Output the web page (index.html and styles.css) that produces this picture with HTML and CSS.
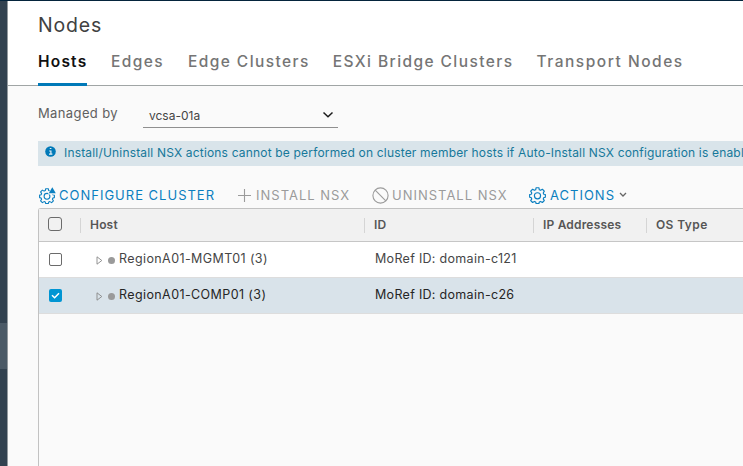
FILE: index.html
```html
<!DOCTYPE html>
<html lang="en">
<head>
<meta charset="utf-8">
<title>Nodes</title>
<link rel="stylesheet" href="styles.css">
</head>
<body>
<svg width="0" height="0" class="defs">
  <symbol id="gear" viewBox="0 0 16 16">
    <path d="M6.700.7h2.600l.4 1.900 1.200.5 1.700-1 1.800 1.800-1 1.700.5 1.200 1.500.3v2.500l-1.500.4-.5 1.200 1 1.600-1.800 1.800-1.700-1-1.200.5-.4 1.500H6.700l-.4-1.500-1.200-.5-1.700 1-1.800-1.800 1-1.600-.5-1.200L.6 9.600V7.100l1.500-.3.5-1.200-1-1.700 1.800-1.800 1.700 1 1.200-.5z" fill="none" stroke="currentColor" stroke-width="1.100" stroke-linejoin="round"/>
    <circle cx="8" cy="8.300" r="2.900" fill="none" stroke="currentColor" stroke-width="1.100"/>
  </symbol>
</svg>
<div class="app">
  <aside class="rail"><div class="rail-active"></div></aside>
  <main class="page">
    <header class="header">
      <h1 class="title">Nodes</h1>
      <nav class="tabs">
        <a class="tab active">Hosts</a>
        <a class="tab edges">Edges</a>
        <a class="tab">Edge Clusters</a>
        <a class="tab">ESXi Bridge Clusters</a>
        <a class="tab transport">Transport Nodes</a>
      </nav>
    </header>
    <section class="content">
      <div class="managed">
        <span class="label">Managed by</span>
        <div class="select">
          <span>vcsa-01a</span>
          <svg width="12" height="8" viewBox="0 0 12 8"><path d="M1.500 1.500 6 5.800l4.500-4.300" fill="none" stroke="#1c1c1c" stroke-width="1.500"/></svg>
        </div>
      </div>
      <div class="info">
        <svg width="11" height="11" viewBox="0 0 11 11"><circle cx="5.500" cy="5.500" r="5.300" fill="#0079b8"/><path d="M4.800 2.500h1.600M4.200 5h1.700v3M4 8.200h3.400" fill="none" stroke="#e4eef4" stroke-width="1.200"/></svg>
        <span>Install/Uninstall NSX actions cannot be performed on cluster member hosts if Auto-Install NSX configuration is enabl</span>
      </div>
      <div class="toolbar">
        <a class="action configure">
          <svg width="17" height="17" viewBox="0 0 17 17"><use href="#gear" y="1" width="16" height="16"/><path d="M8.800 7.400 13 -1 17 -1V7.400z" fill="#fafafa"/><path d="M9.800 6.300 13.300.2l3.500 6.100z" fill="currentColor"/></svg>
          <span>CONFIGURE CLUSTER</span>
        </a>
        <a class="action install disabled">
          <svg width="15" height="15" viewBox="0 0 15 15"><path d="M7.500 1v13M1 7.500h13" stroke="currentColor" stroke-width="1.100"/></svg>
          <span>INSTALL NSX</span>
        </a>
        <a class="action uninstall disabled">
          <svg width="17" height="17" viewBox="0 0 17 17"><circle cx="8.500" cy="8.500" r="7.600" fill="none" stroke="currentColor" stroke-width="1.100"/><path d="m3.200 3.200 10.600 10.600" stroke="currentColor" stroke-width="1.100"/></svg>
          <span>UNINSTALL NSX</span>
        </a>
        <a class="action more">
          <svg width="17" height="17" viewBox="0 0 16 16"><use href="#gear" width="16" height="16"/></svg>
          <span>ACTIONS</span>
          <svg class="caret" width="8" height="6" viewBox="0 0 8 6"><path d="m1 1 3 3 3-3" fill="none" stroke="#666" stroke-width="1.300"/></svg>
        </a>
      </div>
      <div class="grid">
        <div class="row head">
          <div class="check"><i class="box large"></i></div>
          <div class="col">Host</div>
          <div class="col">ID</div>
          <div class="col ip">IP Addresses</div>
          <div class="col os">OS Type</div>
        </div>
        <div class="row">
          <div class="check"><i class="box"></i></div>
          <div class="cell host"><svg width="7" height="9" viewBox="0 0 7 9"><path d="M1 .8v7.400l4.800-3.700z" fill="none" stroke="#888" stroke-width=".9"/></svg><i class="dot"></i><span>RegionA01-MGMT01 (3)</span></div>
          <div class="cell id">MoRef ID: domain-c121</div>
        </div>
        <div class="row selected">
          <div class="check"><i class="box checked"><svg width="13" height="13" viewBox="0 0 13 13"><path d="m3 6.300 2.600 2.500L10 4.300" fill="none" stroke="#fff" stroke-width="1.500"/></svg></i></div>
          <div class="cell host"><svg width="7" height="9" viewBox="0 0 7 9"><path d="M1 .8v7.400l4.800-3.700z" fill="none" stroke="#888" stroke-width=".9"/></svg><i class="dot"></i><span>RegionA01-COMP01 (3)</span></div>
          <div class="cell id">MoRef ID: domain-c26</div>
        </div>
      </div>
    </section>
  </main>
</div>
</body>
</html>
```
FILE: styles.css
```css
* { box-sizing: border-box; }
body {
  margin: 0;
  font-family: Inter, "Liberation Sans", sans-serif;
  font-size: 13px;
  color: #454545;
  white-space: nowrap;
  overflow: hidden;
}
svg { display: block; flex: none; }
.defs { display: none; }
.app { display: flex; height: 466px; border-top: 1px solid #04243c; }
.rail { flex: none; width: 8px; padding-top: 322px; background: #324250; border-right: 1px solid #939a9f; }
.rail-active { height: 46px; background: #4b5a67; }
.page { flex: 1; min-width: 0; display: flex; flex-direction: column; background: #fafafa; }

.header { height: 85px; padding-left: 30px; background: #fff; border-bottom: 1px solid #a0a5a5; }
.title { margin: 0; padding-top: 12px; font-size: 19.500px; line-height: 25px; font-weight: 400; letter-spacing: .8px; color: #414141; }
.tabs { display: flex; gap: 23px; height: 48px; }
.tab { height: 48px; padding-top: 13px; font-size: 15.500px; line-height: 22px; font-weight: 500; letter-spacing: 1.420px; color: #757575; }
.tab.active { width: 49px; margin-right: 1px; letter-spacing: 1.200px; color: #111; font-weight: 600; border-bottom: 3px solid #0079b8; }
.tab.edges { width: 54px; }
.tab.transport { letter-spacing: 1.520px; }

.content { flex: 1; display: flex; flex-direction: column; padding-left: 30px; }
.managed { display: flex; height: 42px; align-items: flex-end; }
.label { width: 105px; height: 23px; line-height: 16px; letter-spacing: .38px; color: #606060; }
.select { display: flex; justify-content: space-between; align-items: center; width: 195px; height: 25px; padding: 0 4px 0 6px; border-bottom: 1px solid #8f8f8f; font-size: 12px; }
.info { display: flex; gap: 8px; height: 25px; margin-top: 13px; padding: 5px 0 0 7px; background: #d9e4ea; color: #16789a; font-size: 12px; line-height: 14px; letter-spacing: .177px; overflow: hidden; }

.toolbar { display: flex; height: 42px; padding-top: 20px; color: #0b7fc0; letter-spacing: 1px; }
.action { display: flex; align-items: center; height: 18px; }
.action.disabled { color: #9b9b9b; }
.configure { width: 199px; padding-left: 1px; gap: 3px; }
.install { width: 135px; gap: 4px; }
.uninstall { width: 157px; gap: 3px; }
.more { gap: 4px; }

.grid { flex: 1; border: 1px solid #c2c2c2; border-right: 0; border-bottom: 0; border-top-left-radius: 3px; }
.row { display: grid; grid-template-columns: 41px 284px 169px 113px 1fr; align-items: center; height: 36px; background: #fff; border-bottom: 1px solid #ddd; }
.row.head { height: 33px; background: #f1f1f1; border-bottom-color: #c6c6c6; font-size: 12px; font-weight: 600; color: #565656; }
.row.selected { background: #d9e3ea; color: #252525; }
.col { height: 15px; line-height: 13px; padding-left: 9px; border-left: 1px solid #d5d5d5; letter-spacing: .18px; }
.col.os { letter-spacing: .4px; }
.check { padding-left: 10px; }
.box { display: block; width: 13px; height: 13px; border: 1px solid #6b6b6b; border-radius: 2px; background: #fff; }
.box.large { width: 14px; height: 14px; margin: -2px 0 0 -1px; border-width: 1.500px; border-radius: 3px; background: transparent; }
.box.checked { border: 0; background: #0095d3; }
.cell { padding-bottom: 2px; font-size: 12.500px; letter-spacing: .3px; }
.host { display: flex; align-items: center; padding-left: 16px; letter-spacing: .4px; }
.host svg { margin-top: 4px; }
.dot { width: 7px; height: 7px; margin: 3px 4px 0 5px; border-radius: 50%; background: #9a9a9a; }
.id { padding-left: 11px; }
```
